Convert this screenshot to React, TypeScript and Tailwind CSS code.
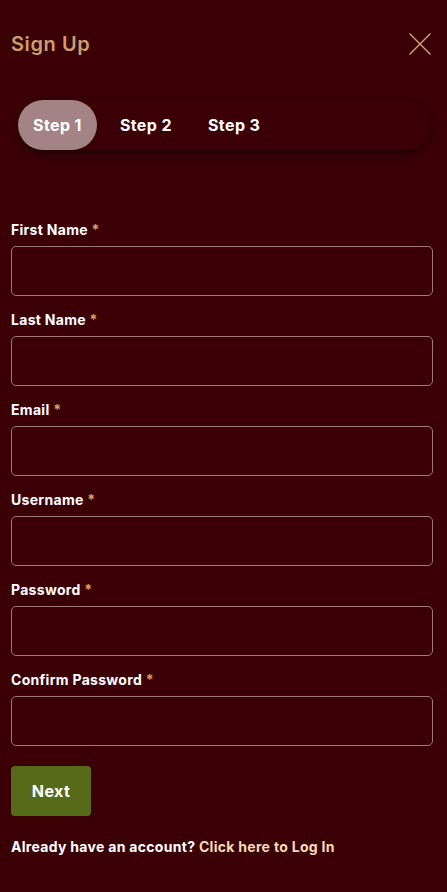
const fields = ['First Name', 'Last Name', 'Email', 'Username', 'Password', 'Confirm Password']

const Field = ({ label }: { label: string }) => (
  <div className="flex flex-col gap-[6px]">
    <label className="text-[14px] font-bold tracking-[0.3px] text-white leading-5">
      {label} <span className="text-[#d9a35e]">*</span>
    </label>
    <input
      type={label.includes('Password') ? 'password' : 'text'}
      className="h-[50px] w-full rounded-[5px] border border-[#a27878] bg-transparent px-3 text-white outline-none"
    />
  </div>
)

export default function App() {
  return (
    <div
      className="min-h-[892px] w-full bg-[#3a0006] pl-[11px] pr-[14px]"
      style={{ fontFamily: 'Inter, "Liberation Sans", sans-serif' }}
    >
      <div className="flex items-center justify-between pt-[30px]">
        <h1 className="text-[20px] font-semibold tracking-[0.6px] text-[#c9a06b] leading-7">Sign Up</h1>
        <svg width="22" height="22" viewBox="0 0 22 22" className="mr-[2px] text-[#d7a673]">
          <path d="M1 1 21 21M21 1 1 21" stroke="currentColor" strokeWidth="1.4" strokeLinecap="round" />
        </svg>
      </div>

      <div className="ml-[7px] mr-[2px] mt-[42px] flex items-center gap-[4px] rounded-[26px] pr-4 shadow-[0_4px_10px_rgba(0,0,0,0.45)]">
        <button className="h-[50px] rounded-full bg-[#a38383] px-[15px] text-[16px] font-bold tracking-[0.4px] text-white">Step 1</button>
        <button className="h-[50px] rounded-full pl-[19px] pr-[16px] text-[16px] font-bold tracking-[0.4px] text-white">Step 2</button>
        <button className="h-[50px] rounded-full px-[16px] text-[16px] font-bold tracking-[0.4px] text-white">Step 3</button>
      </div>

      <div className="mt-[70px] flex flex-col gap-[14px]">
        {fields.map((f) => (
          <Field key={f} label={f} />
        ))}
      </div>

      <button className="mt-[20px] h-[50px] w-[80px] rounded-[4px] bg-[#566b1a] text-[16px] font-bold tracking-[0.4px] text-white">
        Next
      </button>

      <p className="mt-[20px] text-[14px] font-bold tracking-[0.3px] text-white">
        Already have an account? <span className="text-[#f4dcb4]">Click here to Log In</span>
      </p>
    </div>
  )
}
